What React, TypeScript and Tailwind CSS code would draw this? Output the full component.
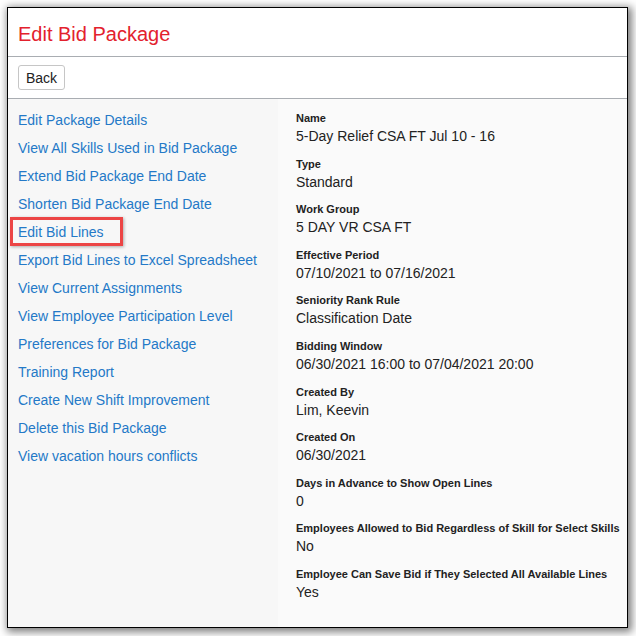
import React from "react";

const links = [
  "Edit Package Details",
  "View All Skills Used in Bid Package",
  "Extend Bid Package End Date",
  "Shorten Bid Package End Date",
  "Edit Bid Lines",
  "Export Bid Lines to Excel Spreadsheet",
  "View Current Assignments",
  "View Employee Participation Level",
  "Preferences for Bid Package",
  "Training Report",
  "Create New Shift Improvement",
  "Delete this Bid Package",
  "View vacation hours conflicts",
];

const fields: [string, string][] = [
  ["Name", "5-Day Relief CSA FT Jul 10 - 16"],
  ["Type", "Standard"],
  ["Work Group", "5 DAY VR CSA FT"],
  ["Effective Period", "07/10/2021 to 07/16/2021"],
  ["Seniority Rank Rule", "Classification Date"],
  ["Bidding Window", "06/30/2021 16:00 to 07/04/2021 20:00"],
  ["Created By", "Lim, Keevin"],
  ["Created On", "06/30/2021"],
  ["Days in Advance to Show Open Lines", "0"],
  ["Employees Allowed to Bid Regardless of Skill for Select Skills", "No"],
  ["Employee Can Save Bid if They Selected All Available Lines", "Yes"],
];

export default function App() {
  return (
    <div
      className="w-[636px] h-[636px] bg-white pl-[7px] pt-[7px]"
      style={{ fontFamily: '"Liberation Sans", Arial, sans-serif' }}
    >
      <div className="w-[621px] h-[621px] border border-black bg-white shadow-[2px_2px_8px_2px_rgba(0,0,0,0.5)] flex flex-col">
        <div className="h-[49px] border-b border-[#a9adb2] pl-[10px] pt-[14px] shrink-0">
          <h1 className="text-[20px] leading-[24px] text-[#e3212d]">Edit Bid Package</h1>
        </div>
        <div className="h-[42px] border-b border-[#a9adb2] pl-[10px] pt-[8px] shrink-0">
          <button className="h-[25px] px-[7px] border border-[#c6c6c6] rounded-[3px] bg-white text-[14px] leading-[20px] text-[#222]">
            Back
          </button>
        </div>
        <div className="flex flex-1">
          <div className="w-[270px] bg-[#f7f7f7] pl-[10px] pt-[7px] shrink-0">
            {links.map((l) => (
              <div key={l} className="h-[28px] leading-[28px] text-[14px] text-[#2479c7]">
                {l === "Edit Bid Lines" ? (
                  <span className="relative inline-block">
                    {l}
                    <span className="absolute left-[-8px] right-[-19px] top-[-1px] bottom-0 border-[3px] border-[#ec4545] shadow-[1px_1px_3px_rgba(0,0,0,0.3)]" />
                  </span>
                ) : (
                  l
                )}
              </div>
            ))}
          </div>
          <div className="flex-1 bg-[#fafafa] pl-[18px] pt-[11px]">
            {fields.map(([k, v]) => (
              <div key={k} className="mb-[9.6px]">
                <div className="text-[11px] leading-[16px] font-bold text-[#222]">{k}</div>
                <div className="text-[14px] leading-[20px] text-[#222]">{v}</div>
              </div>
            ))}
          </div>
        </div>
      </div>
    </div>
  );
}
